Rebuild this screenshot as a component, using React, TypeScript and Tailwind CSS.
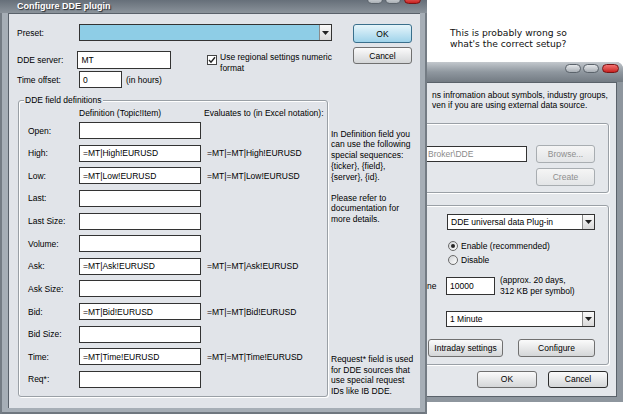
import React from 'react';

const sans = "font-['Liberation_Sans',Arial,sans-serif]";

type Kids = { className?: string; children?: React.ReactNode };

function Arrow() {
  return (
    <svg width="7" height="4" viewBox="0 0 7 4">
      <path d="M0 0h7L3.5 4z" fill="#222" />
    </svg>
  );
}

function Input({ className = '', children }: Kids) {
  return (
    <div className={`flex items-center bg-white border border-[#333] pl-[3px] whitespace-nowrap overflow-hidden ${className}`}>
      {children}
    </div>
  );
}

function Select({ className = '', children }: Kids) {
  return (
    <div className={`flex items-stretch border border-[#333] ${className}`}>
      <div className="flex-1 flex items-center pl-[3px] whitespace-nowrap overflow-hidden">{children}</div>
      <div className="w-[12px] flex items-center justify-center border-l border-[#8a8a8a] bg-gradient-to-b from-[#fafafa] to-[#d9d9d9]">
        <Arrow />
      </div>
    </div>
  );
}

function Button({ className = '', children, tone = 'normal' }: Kids & { tone?: 'normal' | 'default' | 'disabled' | 'focus' }) {
  const look = {
    normal: 'from-[#fbfbfb] to-[#d4d6d8] border-[#707070] text-black',
    focus: 'from-[#fbfbfb] to-[#d4d6d8] border-[#2c2c2c] text-black',
    default: 'from-[#e6f5fb] to-[#9fd3ea] border-[#3a6f8c] text-black',
    disabled: 'from-[#f5f5f5] to-[#e3e5e7] border-[#a8adb1] text-[#8e8e8e]',
  }[tone];
  return (
    <div className={`flex items-center justify-center rounded-[3px] border bg-gradient-to-b ${look} ${className}`}>
      {children}
    </div>
  );
}

function GroupBox({ className = '', legend, children }: Kids & { legend?: string }) {
  return (
    <div className={`relative rounded-[3px] border border-[#9aa0a6] shadow-[inset_1px_1px_0_#fff,1px_1px_0_#fff] ${className}`}>
      {legend && (
        <span className="absolute -top-[6px] left-[5px] px-[1px] bg-[#e1e4e9] leading-[10px]">{legend}</span>
      )}
      {children}
    </div>
  );
}

function Checkbox() {
  return (
    <span className="w-[10px] h-[10px] border border-[#444] bg-white flex items-center justify-center">
      <svg width="8" height="8" viewBox="0 0 8 8">
        <path d="M1 4l2 2.2L7 1.2" stroke="#222" strokeWidth="1.4" fill="none" />
      </svg>
    </span>
  );
}

function Radio({ on }: { on?: boolean }) {
  return (
    <span className="w-[10px] h-[10px] rounded-full border border-[#6a6a6a] bg-gradient-to-br from-[#cfd2d5] to-white flex items-center justify-center">
      {on && <span className="w-[4px] h-[4px] rounded-full bg-[#262626]" />}
    </span>
  );
}

function Pills({ className = '' }: { className?: string }) {
  return (
    <div className={`absolute flex ${className}`}>
      <span className="w-[16px] h-[9px] rounded-full border border-[#5b636b] bg-gradient-to-b from-[#e4e7ea] to-[#a9afb5]" />
      <span className="ml-[2px] w-[16px] h-[9px] rounded-full border border-[#5b636b] bg-gradient-to-b from-[#e4e7ea] to-[#a9afb5]" />
      <span className="ml-[3px] w-[17px] h-[9px] rounded-full border border-[#7a1414] bg-gradient-to-b from-[#f27070] to-[#c81e1e]" />
    </div>
  );
}

const fields = [
  ['Open:', '', ''],
  ['High:', '=MT|High!EURUSD', '=MT|=MT|High!EURUSD'],
  ['Low:', '=MT|Low!EURUSD', '=MT|=MT|Low!EURUSD'],
  ['Last:', '', ''],
  ['Last Size:', '', ''],
  ['Volume:', '', ''],
  ['Ask:', '=MT|Ask!EURUSD', '=MT|=MT|Ask!EURUSD'],
  ['Ask Size:', '', ''],
  ['Bid:', '=MT|Bid!EURUSD', '=MT|=MT|Bid!EURUSD'],
  ['Bid Size:', '', ''],
  ['Time:', '=MT|Time!EURUSD', '=MT|=MT|Time!EURUSD'],
  ['Req*:', '', ''],
];

function MainDialog() {
  return (
    <div className="absolute left-0 top-0 z-10 w-[427px] h-[414px] flex flex-col bg-[#a6aeb6]">
      {/* title bar */}
      <div className="relative h-[13px] shrink-0 bg-gradient-to-b from-[#666f79] to-[#8b939b]">
        <span className="absolute left-[17px] top-[1px] text-[9px] leading-[11px] font-bold text-white [text-shadow:1px_1px_1px_#262b30]">
          Configure DDE plugin
        </span>
        <Pills className="right-[6px] -top-[5px]" />
      </div>

      {/* frame + body */}
      <div className="flex-1 flex pl-[6px] pr-[7px] pb-[6px] border-l-2 border-[#747c84] shadow-[inset_-2px_0_0_#747c84,inset_0_-2px_0_#6f777f]">
        <div className="flex-1 bg-[#e1e4e9] border-t border-l border-[#59616a] pt-[10px]">
          {/* top fields */}
          <div className="flex ml-[8px]">
            <div className="w-[315px] flex flex-col">
              <div className="flex items-center h-[17px]">
                <span className="w-[62px]">Preset:</span>
                <Select className="w-[253px] h-[17px] bg-[#8ecde6]" />
              </div>
              <div className="flex items-center h-[18px] mt-[10px]">
                <span className="w-[62px]">DDE server:</span>
                <Input className="w-[96px] h-[18px]">MT</Input>
                <div className="ml-[36px] self-start mt-[1px] flex items-start gap-[3px]">
                  <span className="mt-[3px]">
                    <Checkbox />
                  </span>
                  <span className="leading-[10.5px] whitespace-nowrap">
                    Use regional settings numeric
                    <br />
                    format
                  </span>
                </div>
              </div>
              <div className="flex items-center h-[17px] mt-[2px]">
                <span className="w-[62px]">Time offset:</span>
                <Input className="w-[43px] h-[17px]">0</Input>
                <span className="ml-[4px]">(in hours)</span>
              </div>
            </div>
            <div className="ml-[21px] flex flex-col gap-[4px] w-[59px]">
              <Button tone="default" className="h-[19px]">OK</Button>
              <Button className="h-[17px]">Cancel</Button>
            </div>
          </div>

          {/* field definitions */}
          <div className="flex items-start ml-[9px] mt-[12px]">
            <GroupBox legend="DDE field definitions" className="w-[310px] h-[297px] pl-[9px] pt-[7px]">
              <div className="flex h-[10px] items-center">
                <span className="w-[51px]" />
                <span className="w-[125px]">Definition (Topic!Item)</span>
                <span>Evaluates to (in Excel notation):</span>
              </div>
              <div className="mt-[4px] flex flex-col gap-[5.64px]">
                {fields.map(([label, def, ev]) => (
                  <div key={label} className="flex items-center h-[17px]">
                    <span className="w-[51px]">{label}</span>
                    <Input className="w-[122px] h-[17px]">{def}</Input>
                    <span className="ml-[6px] whitespace-nowrap">{ev}</span>
                  </div>
                ))}
              </div>
            </GroupBox>
            <div className="ml-[3px] h-[297px] flex flex-col leading-[10.8px] whitespace-nowrap">
              <p className="mt-[28.6px]">
                In Definition field you
                <br />
                can use the following
                <br />
                special sequences:
                <br />
                {'{ticker}, {field},'}
                <br />
                {'{server}, {id}.'}
              </p>
              <p className="mt-[10px]">
                Please refer to
                <br />
                documentation for
                <br />
                more details.
              </p>
              <p className="mt-auto">
                Request* field is used
                <br />
                for DDE sources that
                <br />
                use special request
                <br />
                IDs like IB DDE.
              </p>
            </div>
          </div>
        </div>
      </div>
    </div>
  );
}

function SecondWindow() {
  return (
    <div className="absolute left-[400px] top-[62px] w-[223px] h-[340px] flex flex-col bg-[#8e969e] rounded-tr-[7px]">
      <div className="relative h-[20px] shrink-0 rounded-tr-[7px] bg-gradient-to-b from-[#c3c8cd] via-[#8f979f] to-[#737b83]">
        <Pills className="right-[4px] top-[2px]" />
      </div>
      <div className="flex-1 flex pr-[6px] pb-[5px]">
        <div className="flex-1 bg-[#e4e7eb] border-t border-r border-b border-[#5a626a] flex flex-col">
          <p className="pl-[32px] pt-[6.6px] leading-[10.8px] whitespace-nowrap">
            ns infromation about symbols, industry groups,
            <br />
            ven if you are using external data source.
          </p>

          <GroupBox className="mt-[11.8px] w-[209px] h-[70px] flex items-start pl-[23px] pt-[21px]">
            <Input className="mt-[1px] w-[103px] h-[16px] text-[#8a8a8a] border-[#8f9499]">Broker\DDE</Input>
            <div className="ml-[9px] w-[59px] flex flex-col gap-[5px]">
              <Button tone="disabled" className="h-[18px]">Browse...</Button>
              <Button tone="disabled" className="h-[18px]">Create</Button>
            </div>
          </GroupBox>

          <GroupBox className="mt-[12px] w-[209px] h-[160px] flex flex-col pt-[8px]">
            <Select className="ml-[46px] w-[148px] h-[16px] bg-white">DDE universal data Plug-in</Select>
            <div className="ml-[47px] mt-[10px] h-[12px] flex items-center gap-[3px]">
              <Radio on />
              <span>Enable (recommended)</span>
            </div>
            <div className="ml-[47px] mt-[2px] h-[12px] flex items-center gap-[3px]">
              <Radio />
              <span>Disable</span>
            </div>
            <div className="ml-[26px] mt-[11px] h-[18px] flex items-center">
              <span className="w-[19px]">ne</span>
              <Input className="w-[49px] h-[18px]">10000</Input>
              <span className="ml-[5px] leading-[11px] whitespace-nowrap">
                (approx. 20 days,
                <br />
                312 KB per symbol)
              </span>
            </div>
            <Select className="ml-[45px] mt-[16px] w-[149px] h-[16px] bg-white">1 Minute</Select>
            <div className="ml-[27px] mt-[12px] flex">
              <Button className="w-[75px] h-[18px]">Intraday settings</Button>
              <Button className="ml-[15px] w-[77px] h-[18px]">Configure</Button>
            </div>
          </GroupBox>

          <div className="mt-[6px] pr-[8px] flex justify-end gap-[11px]">
            <Button className="w-[60px] h-[17px]">OK</Button>
            <Button tone="focus" className="w-[60px] h-[17px]">Cancel</Button>
          </div>
        </div>
      </div>
    </div>
  );
}

export default function App() {
  return (
    <div className={`relative w-[625px] h-[420px] bg-white overflow-hidden ${sans} text-[8.5px] leading-[10px] text-black`}>
      <SecondWindow />
      <MainDialog />
      <p className="absolute left-[450px] top-[26.5px] font-['DejaVu_Sans',Verdana,sans-serif] text-[9.2px] leading-[11px] text-[#111] whitespace-nowrap">
        This is probably wrong so
        <br />
        what's the correct setup?
      </p>
    </div>
  );
}
